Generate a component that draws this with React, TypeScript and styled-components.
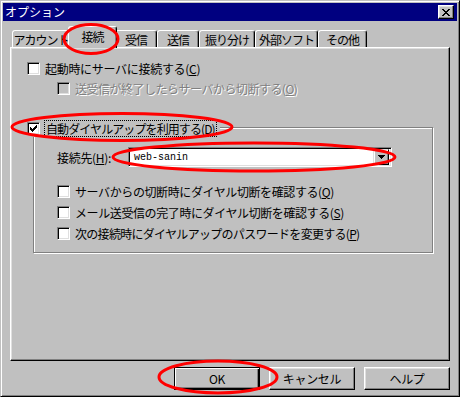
import React from 'react';
import styled, { createGlobalStyle } from 'styled-components';

const GlobalStyle = createGlobalStyle`
    html, body {
        margin: 0;
        padding: 0;
        background: #c0c0c0;
    }
    body {
        font-family: "Noto Sans CJK JP", "Noto Sans", sans-serif;
        font-size: 12px;
        color: #000;
    }
`;

const Window = styled.div`
    position: relative;
    width: 460px;
    height: 397px;
    box-sizing: border-box;
    background: #c0c0c0;
    border: 1px solid;
    border-color: #c0c0c0 #000 #000 #c0c0c0;
    box-shadow: inset 1px 1px #fff, inset -1px -1px #808080;
    padding: 2px;
    display: flex;
    flex-direction: column;
`;

const TitleBar = styled.div`
    height: 18px;
    background: #000080;
    color: #fff;
    display: flex;
    align-items: center;
    justify-content: space-between;
    padding: 0 3px 0 2px;
    line-height: 18px;
`;

const CloseButton = styled.div`
    width: 16px;
    height: 14px;
    box-sizing: border-box;
    background: #c0c0c0;
    border: 1px solid;
    border-color: #fff #000 #000 #fff;
    box-shadow: inset -1px -1px #808080, inset 1px 1px #dfdfdf;
    display: flex;
    align-items: center;
    justify-content: center;
`;

const Body = styled.div`
    flex: 1;
    padding: 5px 7px 0 7px;
    display: flex;
    flex-direction: column;
`;

const TabRow = styled.div`
    display: flex;
    align-items: flex-end;
    height: 21px;
    padding-left: 2px;
    position: relative;
    z-index: 1;
`;

const Tab = styled.div<{ $w: number; $active?: boolean }>`
    width: ${p => p.$w}px;
    height: ${p => (p.$active ? 22 : 17)}px;
    margin: ${p => (p.$active ? '0 -2px -1px -2px' : '0')};
    position: relative;
    z-index: ${p => (p.$active ? 2 : 1)};
    box-sizing: border-box;
    background: #c0c0c0;
    border: 1px solid;
    border-bottom: none;
    border-color: #fff #000 transparent #fff;
    border-radius: 3px 3px 0 0;
    box-shadow: inset -1px 0 #808080;
    display: flex;
    align-items: center;
    justify-content: center;
    padding-bottom: ${p => (p.$active ? 3 : 0)}px;
    letter-spacing: -1px;
    white-space: nowrap;
`;

const Panel = styled.div`
    height: 314px;
    box-sizing: border-box;
    border: 1px solid;
    border-color: #fff #000 #000 #fff;
    box-shadow: inset -1px -1px #808080, inset 1px 1px #dfdfdf;
    padding: 0 0 0 16px;
    display: flex;
    flex-direction: column;
    align-items: flex-start;
`;

const CheckRow = styled.div<{ $top?: number; $left?: number }>`
    display: flex;
    align-items: center;
    gap: 5px;
    height: 17px;
    margin-top: ${p => p.$top ?? 0}px;
    margin-left: ${p => p.$left ?? 0}px;
    white-space: nowrap;
`;

const Box = styled.div<{ $disabled?: boolean }>`
    width: 13px;
    height: 13px;
    flex: none;
    box-sizing: border-box;
    border: 1px solid;
    border-color: #808080 #fff #fff #808080;
    box-shadow: inset 1px 1px #000, inset -1px -1px #dfdfdf;
    background: ${p => (p.$disabled ? '#c0c0c0' : '#fff')};
    display: flex;
    align-items: center;
    justify-content: center;
`;

const Label = styled.span<{ $disabled?: boolean; $tight?: number }>`
    color: ${p => (p.$disabled ? '#808080' : '#000')};
    text-shadow: ${p => (p.$disabled ? '1px 1px #fff' : 'none')};
    line-height: 17px;
    letter-spacing: ${p => p.$tight ?? -0.5}px;
`;

const Group = styled.div`
    margin: 30px 0 0 6px;
    width: 400px;
    box-sizing: border-box;
    border: 1px solid #808080;
    box-shadow: inset 1px 1px #fff, 1px 1px #fff;
    padding: 0 0 10px 23px;
    display: flex;
    flex-direction: column;
    align-items: flex-start;
`;

const Legend = styled.div`
    display: flex;
    align-items: center;
    gap: 4px;
    height: 17px;
    margin: -8px 0 0 -30px;
    padding-right: 3px;
    background: #c0c0c0;
    white-space: nowrap;
`;

const FocusLabel = styled.span`
    box-sizing: border-box;
    height: 17px;
    line-height: 15px;
    padding: 0 1px;
    border: 1px dotted #000;
    letter-spacing: -0.9px;
`;

const FieldRow = styled.div`
    display: flex;
    align-items: center;
    margin-top: 10px;
`;

const FieldLabel = styled.span`
    width: 71px;
    letter-spacing: -0.3px;
`;

const Combo = styled.div`
    width: 264px;
    height: 20px;
    box-sizing: border-box;
    border: 1px solid;
    border-color: #808080 #fff #fff #808080;
    box-shadow: inset 1px 1px #000, inset -1px -1px #dfdfdf;
    background: #fff;
    display: flex;
    align-items: center;
    padding: 1px 2px 1px 5px;
    font-family: "Liberation Mono", monospace;
    font-size: 10px;
`;

const DropButton = styled.div`
    margin-left: auto;
    width: 16px;
    height: 16px;
    box-sizing: border-box;
    background: #c0c0c0;
    border: 1px solid;
    border-color: #dfdfdf #000 #000 #dfdfdf;
    box-shadow: inset 1px 1px #fff, inset -1px -1px #808080;
    display: flex;
    align-items: center;
    justify-content: center;
`;

const ButtonRow = styled.div`
    display: flex;
    justify-content: flex-end;
    gap: 9px;
    margin-top: 6px;
`;

const Button = styled.div<{ $default?: boolean }>`
    width: 86px;
    height: 23px;
    box-sizing: border-box;
    background: #c0c0c0;
    border: 1px solid;
    border-color: ${p => (p.$default ? '#000' : '#fff #000 #000 #fff')};
    box-shadow: ${p =>
        p.$default
            ? 'inset 1px 1px #fff, inset -1px -1px #000, inset -2px -2px #808080'
            : 'inset -1px -1px #808080, inset 1px 1px #dfdfdf'};
    display: flex;
    align-items: center;
    justify-content: center;
    letter-spacing: -0.3px;
`;

const Marks = styled.svg`
    position: absolute;
    top: -1px;
    left: -1px;
    pointer-events: none;
    z-index: 5;
`;

const Check = () => (
    <svg width="7" height="7" viewBox="0 0 7 7" shapeRendering="crispEdges">
        <path d="M0 2h1v1h1v1h1V3h1V2h1V1h1V0h1v3H6v1H5v1H4v1H3v1H2V6H1V5H0z" fill="#000" />
    </svg>
);

const tabs = [
    { label: 'アカウント', w: 58 },
    { label: '接続', w: 49, active: true },
    { label: '受信', w: 42 },
    { label: '送信', w: 42 },
    { label: '振り分け', w: 56 },
    { label: '外部ソフト', w: 63 },
    { label: 'その他', w: 49 },
];

const App: React.FC = () => {
    return (
        <>
            <GlobalStyle />
            <Window>
                <TitleBar>
                    <span>オプション</span>
                    <CloseButton>
                        <svg width="8" height="7" viewBox="0 0 8 7" shapeRendering="crispEdges">
                            <path d="M0 0h2v1h1v1h2V1h1V0h2v1H7v1H6v1H5v1h1v1h1v1h1v1H6V6H5V5H3v1H2v1H0V6h1V5h1V4h1V3H2V2H1V1H0z" fill="#000" />
                        </svg>
                    </CloseButton>
                </TitleBar>
                <Body>
                    <TabRow>
                        {tabs.map(t => (
                            <Tab key={t.label} $w={t.w} $active={t.active}>{t.label}</Tab>
                        ))}
                    </TabRow>
                    <Panel>
                        <CheckRow $top={12}>
                            <Box />
                            <Label $tight={-0.3}>起動時にサーバに接続する(<u>C</u>)</Label>
                        </CheckRow>
                        <CheckRow $top={3} $left={30}>
                            <Box $disabled />
                            <Label $disabled>送受信が終了したらサーバから切断する(<u>O</u>)</Label>
                        </CheckRow>
                        <Group>
                            <Legend>
                                <Box><Check /></Box>
                                <FocusLabel>自動ダイヤルアップを利用する(<u>D</u>)</FocusLabel>
                            </Legend>
                            <FieldRow>
                                <FieldLabel>接続先(<u>H</u>):</FieldLabel>
                                <Combo>
                                    <span>web-sanin</span>
                                    <DropButton>
                                        <svg width="7" height="4" viewBox="0 0 7 4" shapeRendering="crispEdges">
                                            <path d="M0 0h7v1H6v1H5v1H4v1H3V3H2V2H1V1H0z" fill="#000" />
                                        </svg>
                                    </DropButton>
                                </Combo>
                            </FieldRow>
                            <CheckRow $top={16}>
                                <Box />
                                <Label $tight={-0.4}>サーバからの切断時にダイヤル切断を確認する(<u>Q</u>)</Label>
                            </CheckRow>
                            <CheckRow $top={4}>
                                <Box />
                                <Label $tight={-0.4}>メール送受信の完了時にダイヤル切断を確認する(<u>S</u>)</Label>
                            </CheckRow>
                            <CheckRow $top={4}>
                                <Box />
                                <Label $tight={-0.7}>次の接続時にダイヤルアップのパスワードを変更する(<u>P</u>)</Label>
                            </CheckRow>
                        </Group>
                    </Panel>
                    <ButtonRow>
                        <Button $default>OK</Button>
                        <Button>キャンセル</Button>
                        <Button>ヘルプ</Button>
                    </ButtonRow>
                </Body>
                <Marks width="460" height="397" viewBox="0 0 460 397">
                    <g fill="none" stroke="#ff0000" strokeWidth="3">
                        <ellipse cx="91" cy="39" rx="27" ry="14.5" />
                        <ellipse cx="122" cy="127" rx="110" ry="13.5" />
                        <ellipse cx="254" cy="157" rx="141" ry="14" />
                        <ellipse cx="218" cy="377" rx="59" ry="16" />
                    </g>
                </Marks>
            </Window>
        </>
    );
};

export default App;
